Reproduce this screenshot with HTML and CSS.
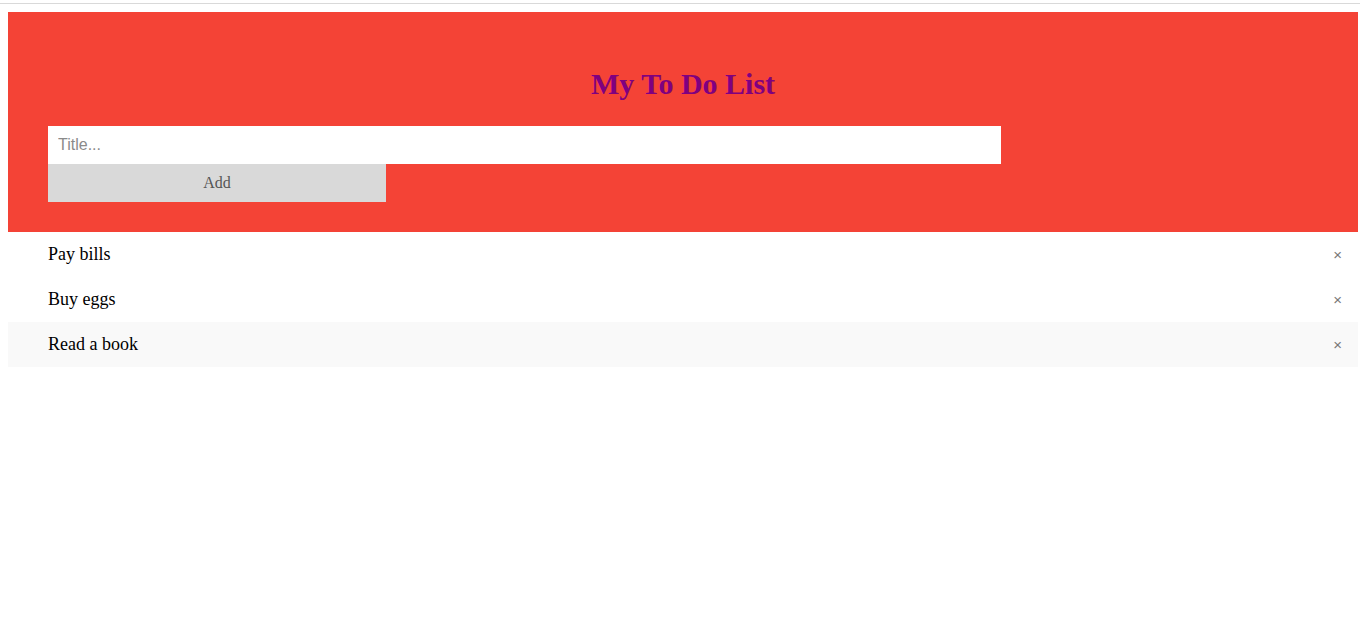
FILE: index.html
```html
<!DOCTYPE html>
<html>
<head>
<meta charset="utf-8">
<link rel="stylesheet" href="styles.css">
</head>
<body>
<div class="topline"></div>
<div class="page">
  <div class="header">
    <h2 class="title">My To Do List</h2>
    <div class="form">
      <input class="title-input" type="text" placeholder="Title...">
      <span class="add-btn">Add</span>
    </div>
  </div>
  <ul class="list">
    <li class="item"><span>Pay bills</span><span class="close">&times;</span></li>
    <li class="item"><span>Buy eggs</span><span class="close">&times;</span></li>
    <li class="item item-alt"><span>Read a book</span><span class="close">&times;</span></li>
  </ul>
</div>
</body>
</html>
```
FILE: styles.css
```css
html, body {
  margin: 0;
  padding: 0;
  background: #fff;
  font-family: "Liberation Serif", "Times New Roman", serif;
}
.topline {
  margin-top: 3px;
  height: 1px;
  background: #d9d9d9;
}
.page {
  margin: 8px 2px 0 8px;
}
.header {
  background: #f44336;
  padding: 30px 40px;
  text-align: center;
}
.title {
  margin: 24px 0 24px;
  font-size: 30px;
  line-height: 36px;
  font-weight: bold;
  color: #800080;
}
.form {
  display: flex;
  flex-wrap: wrap;
  text-align: left;
}
.title-input {
  box-sizing: border-box;
  width: 75%;
  height: 38px;
  margin: 0;
  border: none;
  outline: none;
  padding: 10px;
  font-family: "Liberation Sans", Arial, sans-serif;
  font-size: 16px;
  background: #fff;
}
.title-input::placeholder {
  color: #8a8a8a;
}
.form::after {
  content: "";
  flex-basis: 100%;
  order: 1;
}
.add-btn {
  order: 2;
  box-sizing: border-box;
  width: 338px;
  height: 38px;
  line-height: 38px;
  background: #d9d9d9;
  color: #555;
  text-align: center;
  font-size: 16px;
}
.list {
  list-style: none;
  margin: 0;
  padding: 0;
}
.item {
  display: flex;
  justify-content: space-between;
  align-items: center;
  height: 45px;
  padding: 0 16px 0 40px;
  font-size: 18px;
  color: #000;
}
.item-alt {
  background: #f9f9f9;
}
.close {
  font-family: "Liberation Sans", Arial, sans-serif;
  font-size: 15px;
  color: #777;
}
```
